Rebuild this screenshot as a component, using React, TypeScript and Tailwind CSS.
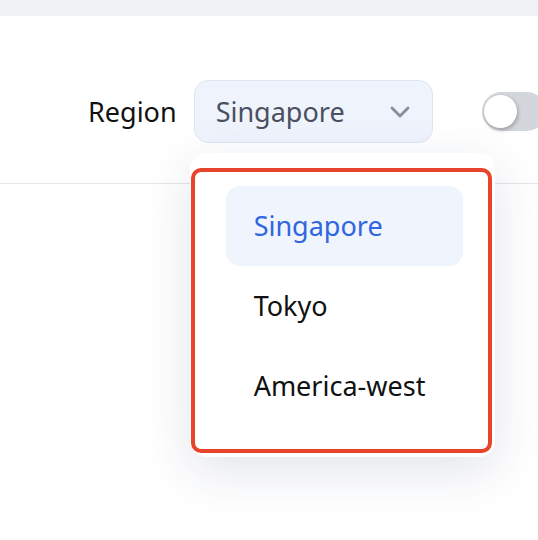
import { ChevronDown } from "lucide-react";

const font = { fontFamily: '"Noto Sans", "Open Sans", sans-serif' };

function Toggle() {
  return (
    <div className="ml-[49px] flex h-[39px] w-[64px] shrink-0 items-center rounded-full bg-[#d3d6dc] pl-[2px]">
      <div className="h-[33px] w-[33px] rounded-full bg-white shadow-[1px_2px_4px_rgba(0,0,0,0.28)]" />
    </div>
  );
}

function RegionMenu() {
  return (
    <div className="absolute left-[-4px] top-[73px] z-10 h-[304px] w-[305px] rounded-[16px] bg-white pl-[36px] pr-[32px] pt-[33px] shadow-[0_14px_50px_rgba(30,45,90,0.13)]">
      <div className="flex h-[80px] items-center rounded-[14px] bg-[#eff4fd] px-[28px] text-[27px] text-[#2f66e0]">
        Singapore
      </div>
      <div className="flex h-[80px] items-center px-[28px] text-[27px] text-[#111]">Tokyo</div>
      <div className="flex h-[80px] items-center px-[28px] text-[27px] text-[#111]">America-west</div>
      {/* annotation outline */}
      <div className="pointer-events-none absolute left-[1px] top-[15px] h-[285px] w-[301px] rounded-[10px] border-[4px] border-[#e8432b]" />
    </div>
  );
}

export default function App() {
  return (
    <div className="h-[540px] w-[538px] overflow-hidden bg-white" style={font}>
      <div className="h-[16px] bg-[#f1f2f6]" />
      <div className="flex h-[168px] items-start border-b border-[#e4e6eb] pl-[88px] pt-[64px]">
        <div className="flex items-center whitespace-nowrap">
          <span className="mr-[17px] pt-[2px] text-[27px] text-[#111]">Region</span>
          <div className="relative">
            <div className="flex h-[63px] w-[239px] items-center justify-between rounded-[14px] border border-[#dfe5f1] bg-[#eff3fc] pl-[21px] pr-[16px] text-[27px] text-[#4a5060]">
              <span className="pt-[2px]">Singapore</span>
              <ChevronDown className="h-[32px] w-[32px] text-[#8a90a0]" strokeWidth={2.2} />
            </div>
            <RegionMenu />
          </div>
          <Toggle />
        </div>
      </div>
    </div>
  );
}
